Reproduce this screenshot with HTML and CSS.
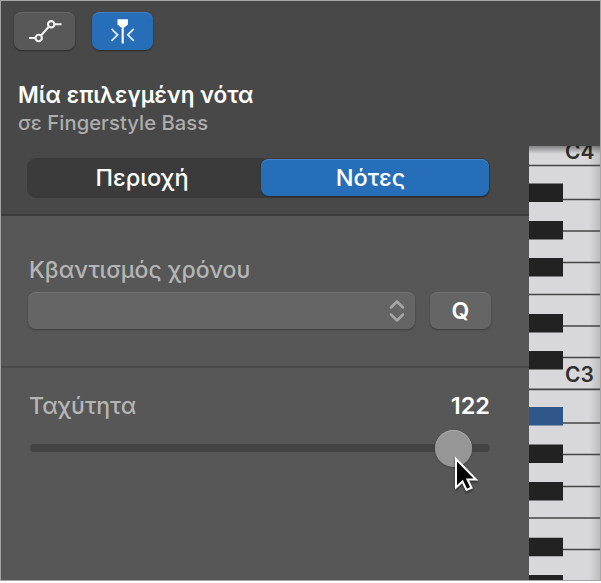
FILE: index.html
```html
<!DOCTYPE html>
<html lang="el">
<head>
<meta charset="utf-8">
<title>Νότες</title>
<link rel="stylesheet" href="styles.css">
</head>
<body>
<main class="window">
  <section class="inspector">
    <header class="top">
      <div class="tools">
        <button class="btn tool" aria-label="Automation">
          <svg width="61" height="38" viewBox="0 0 61 38" fill="none" stroke="#f2f2f2" stroke-width="2.1"><path d="M15 26h6.500M27 23.500l8-9M40.200 12.300h7.300"/><circle cx="24.700" cy="26" r="3.200"/><circle cx="37.200" cy="12.300" r="3.200"/></svg>
        </button>
        <button class="btn tool active" aria-label="Catch">
          <svg width="61" height="38" viewBox="0 0 61 38" fill="none" stroke="#dbe8f7" stroke-width="1.900"><path d="M19.500 16.800l6 6-6 6M41.800 16.800l-6 6 6 6"/><path d="M30.700 10v21.500" stroke="#fff" stroke-width="2.100"/><path d="M25.500 7.300h10.400v5l-3 3h-4.400l-3-3z" fill="#fff" stroke="none"/></svg>
        </button>
      </div>
      <h1 class="title">Μία επιλεγμένη νότα</h1>
      <p class="subtitle">σε Fingerstyle Bass</p>
      <div class="tabs">
        <button class="tab">Περιοχή</button>
        <button class="tab selected">Νότες</button>
      </div>
    </header>
    <section class="quantize">
      <label class="label time">Κβαντισμός χρόνου</label>
      <div class="row">
        <div class="btn select"><svg width="16" height="24" viewBox="0 0 16 24" fill="none" stroke="#a6a6a6" stroke-width="2.500" stroke-linecap="round" stroke-linejoin="round"><path d="M2 8.500l6-6 6 6M2 15.500l6 6 6-6"/></svg></div>
        <button class="btn q">Q</button>
      </div>
    </section>
    <section class="velocity">
      <div class="values"><label class="label speed">Ταχύτητα</label><output class="value">122</output></div>
      <div class="slider"><div class="thumb"></div>
        <svg class="cursor" width="28" height="38" viewBox="0 0 28 38"><path d="M3 3v28.500l6.500-6 4 8.500 5-2.300-4-8.200H23z" fill="#050505" stroke="#fff" stroke-width="2"/></svg>
      </div>
    </section>
  </section>
  <aside class="piano">
    <svg width="71" height="434" viewBox="0 0 71 434">
      <defs><linearGradient id="shade"><stop offset="0" stop-color="#d8d8da"/><stop offset=".85" stop-color="#d8d8da"/><stop offset="1" stop-color="#bdbdc0"/></linearGradient><linearGradient id="drop" x2="0" y2="1"><stop stop-color="#000" stop-opacity=".4"/><stop offset="1" stop-color="#000" stop-opacity="0"/></linearGradient></defs>
      <path fill="url(#shade)" d="M0 0h71v434H0z"/>
      <path d="M0 19.500h71M33 53.500h38M33 85h38M33 116.500h38M0 148.500h71M33 180h38M33 211.500h38M0 243.300h71M33 277h38M33 308.500h38M33 340.500h38M0 372h71M33 403.500h38" stroke="#444446" stroke-width="1.700"/>
      <g fill="#222"><path d="M0 37.500h34v18.500H0zM0 75h34v18.500H0zM0 112h34v18.500H0zM0 168h34v18.500H0zM0 205h34v18.500H0zM0 298.500h34v18.500H0zM0 336h34v18.500H0zM0 391.700h34v18.500H0zM0 429h34v5H0z"/><path fill="#2f5688" d="M0 261h34v18.500H0z"/></g>
      <text x="36" y="12.500">C4</text><text x="36" y="235.500">C3</text>
      <path fill="url(#drop)" d="M0 0h71v8H0z"/>
    </svg>
  </aside>
</main>
</body>
</html>
```
FILE: styles.css
```css
*{box-sizing:border-box}
body{margin:0;background:#fff;font-family:Inter,"Noto Sans",sans-serif}
.window{width:601px;height:581px;border:1px solid #a4a6a5;display:flex;background:#484848;overflow:hidden}
.inspector{width:528px;flex:none;background:#575757}
.top{height:215px;background:#484848;border-bottom:2px solid #3c3c3c;padding:11px 0 0 13px}
button{border:0;padding:0;margin:0;font:inherit;color:#fff}
.btn{display:flex;align-items:center;border-radius:8px;background:#656565;box-shadow:0 1px 2px #333,inset 0 1px #757575}
.tools{display:flex;gap:17px}
.tool{width:61px;height:38px;background:#585858;box-shadow:0 1px 2px #2b2b2b,inset 0 1px #686868}
.active{background:#276eb8;box-shadow:0 1px 2px #2b2b2b,inset 0 1px #437fc0}
.title{margin:30px 0 0 4px;height:29px;line-height:29px;font-size:22.500px;font-weight:600;letter-spacing:.05px;color:#fff;white-space:nowrap}
.subtitle{margin:0 0 0 4px;height:26px;line-height:27px;font-size:20.200px;font-weight:450;letter-spacing:.06px;color:#adadad;white-space:nowrap}
.tabs{display:flex;margin:23px 0 0 13px;width:463px;height:40px;background:#3b3b3b;border-radius:9px;padding:1px}
.tab{width:233px;padding-right:5px;background:none;font-size:23.500px;font-weight:500;line-height:36px}
.selected{width:228px;height:37px;padding-right:9px;background:#276eb8;border-radius:8px;box-shadow:0 1px 2px #292929,inset 0 1px #4985c5}
.quantize{height:152px;padding:39px 0 0 27px;border-bottom:2px solid #4a4a4a}
.label{display:block;height:30px;line-height:30px;font-size:23px;font-weight:500;color:#b5b5b5;white-space:nowrap}
.time{margin-left:1px;letter-spacing:.05px}
.row{display:flex;gap:15px;margin-top:7px}
.select{width:387px;height:37px;justify-content:flex-end;padding-right:10px;box-shadow:0 1px 2px #3d3d3d,inset 0 1px #747474}
.q{width:61px;height:37px;justify-content:center;font-size:23px;font-weight:600;box-shadow:0 1px 2px #3d3d3d,inset 0 1px #747474}
.velocity{padding:23px 39px 0 28px}
.values{display:flex;justify-content:space-between}
.value{font-size:23.500px;line-height:30px;font-weight:600;color:#fff}
.slider{position:relative;height:8px;margin:23px 0 0 1px;background:#434343;border-radius:4px}
.thumb{position:absolute;left:405px;top:-14px;width:37px;height:37px;border-radius:50%;background:#969696;box-shadow:0 1px 2px #444,inset 0 1px #aaa}
.cursor{position:absolute;left:423px;top:12px;filter:drop-shadow(0 2px 1px #333)}
.piano{margin-top:145px;width:71px;height:434px;flex:none}
.piano svg{display:block}
.piano text{font:600 21px Inter,sans-serif;fill:#303030}
```
